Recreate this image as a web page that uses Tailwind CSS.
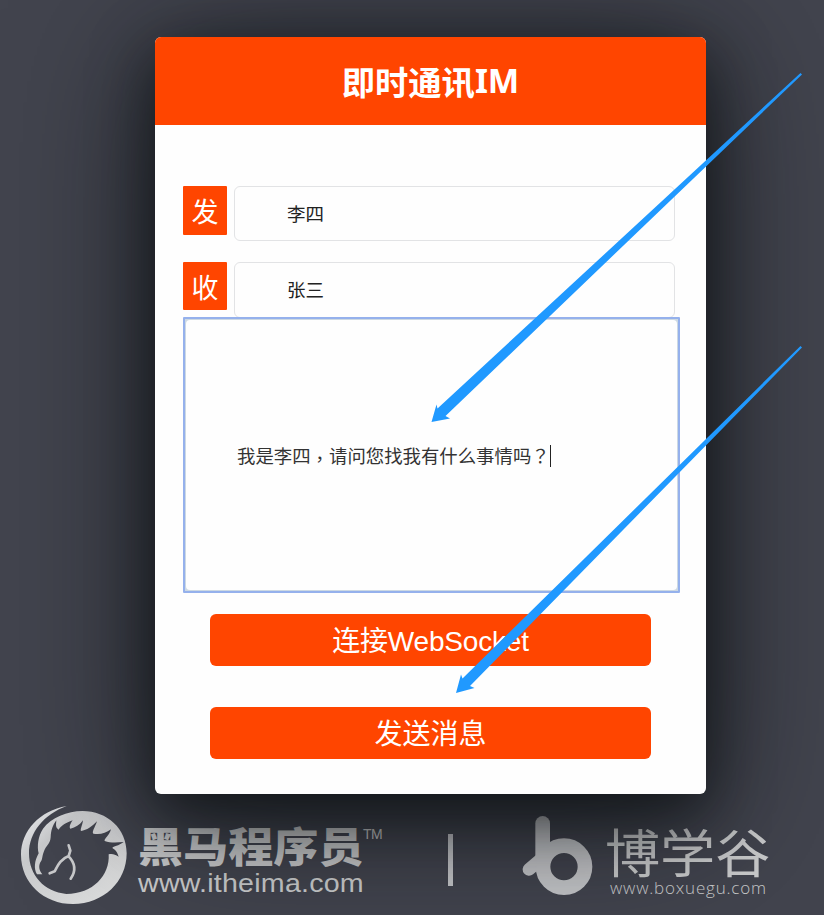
<!DOCTYPE html>
<html lang="zh-CN">
<head>
<meta charset="utf-8">
<title>即时通讯IM</title>
<script src="https://cdn.jsdelivr.net/npm/@tailwindcss/browser@4"></script>
</head>
<body class="bg-[#42444e] font-['Liberation_Sans','Noto_Sans_CJK_SC',sans-serif]">
<div class="relative flex h-[915px] w-[824px] flex-col overflow-hidden pt-[37px]">
  <main class="relative z-10 ml-[155px] flex h-[757px] w-[551px] shrink-0 flex-col rounded-md bg-[#fefefe] shadow-[0_20px_60px_rgba(8,12,14,0.65),0_18px_140px_rgba(8,12,14,0.7)]">
    <h1 class="flex h-[88px] shrink-0 items-center justify-center rounded-t-md bg-[#ff4500] pb-px font-['Noto_Sans','Noto_Sans_CJK_SC',sans-serif] text-[33.3px] font-bold leading-none text-white"><span class="font-['Noto_Sans_CJK_SC',sans-serif]">即时通讯</span>IM</h1>
    <div class="flex flex-col pl-7 pt-[61px]">
      <div class="flex h-[76px] items-start gap-[7px]">
        <span class="flex h-[49px] w-11 items-center justify-center rounded-[1px] bg-[#ff4500] pt-1.5 text-[27px] leading-none text-white">发</span>
        <div class="flex h-[55px] w-[441px] items-center rounded-md border border-[#e2e3e5] pl-[52px] pt-1 text-[18.5px] leading-none text-[#222]">李四</div>
      </div>
      <div class="flex h-[55px] items-start gap-[7px]">
        <span class="flex h-12 w-11 items-center justify-center rounded-[1px] bg-[#ff4500] pt-1.5 text-[27px] leading-none text-white">收</span>
        <div class="flex h-[56px] w-[441px] items-center rounded-md border border-[#e2e3e5] pl-[52px] pt-[3px] text-[18.5px] leading-none text-[#222]">张三</div>
      </div>
      <div class="z-10 h-[276px] w-[497px] rounded-[1px] border-2 border-[#95b1ec] bg-[#cdd9e3] p-px">
        <div class="flex h-full items-center rounded bg-[#fefefe] pl-[51px] pt-0.5 text-[18.4px] leading-none text-[#333]"><span class="whitespace-nowrap">我是李四<span lang="zh-TW" class="relative top-[3px] font-['Noto_Sans_CJK_TC',sans-serif]">，</span>请问您找我有什么事情吗<span lang="zh-TW" class="font-['Noto_Sans_CJK_TC',sans-serif]">？</span></span><span class="h-[22px] w-px bg-[#222]"></span></div>
      </div>
    </div>
    <div class="flex flex-col gap-[41px] pl-[55px] pt-[21px]">
      <button class="flex h-[52px] w-[441px] items-center justify-center rounded-md bg-[#ff4500] pt-[3px] text-[28px] leading-none text-white"><span class="tracking-[-0.2px]">连接WebSocket</span></button>
      <button class="flex h-[52px] w-[441px] items-center justify-center rounded-md bg-[#ff4500] pt-1 text-[28px] leading-none text-white">发送消息</button>
    </div>
  </main>

  <footer class="flex h-[121px] items-start pl-4 pt-[9px] text-[#cbcccd]">
    <svg class="h-[103px] w-[114px] shrink-0" viewBox="48 39 342 309">
      <defs><linearGradient id="silver" x1="0" y1="0" x2="1" y2="1"><stop offset="0" stop-color="#f0f2f5"/><stop offset=".3" stop-color="#c9cacc"/><stop offset="1" stop-color="#e1e2e2"/></linearGradient></defs>
      <path fill="url(#silver)" d="M200 48C119 62 63 123 63 194C63 279 132 342 219 342C311 342 380 275 380 190C380 116 322 63 247 63C203 63 153 83 129 116C114 139 111 169 116 190C103 213 101 237 111 253L127 253C117 242 115 228 121 217C128 209 125 202 132 184C137 168 151 162 152 142C153 121 158 106 169 91C168 105 166 113 176 119C184 106 197 99 218 91C210 102 207 112 211 116C226 113 239 105 249 91C247 107 240 118 243 123C260 121 277 109 291 94C284 114 275 126 280 131C299 135 317 130 333 118C328 137 311 147 314 153C331 159 349 158 371 156C356 168 340 168 337 174C349 181 352 188 356 200C345 193 336 190 326 193C330 256 279 312 199 312C133 306 87 256 87 190C87 127 132 73 200 48Z"/>
      <path fill="none" stroke="#c9cacc" stroke-width="8" stroke-linecap="round" stroke-linejoin="round" d="M206 166L211 182L206 198C179 208 172 230 164 244L149 250M206 199C224 218 229 242 212 266"/>
    </svg>
    <div class="ml-2 mt-[21px] w-[225px]">
      <div class="h-[45px] origin-left scale-x-[1.1] whitespace-nowrap font-['Noto_Sans_CJK_SC',sans-serif] text-[41px] font-black leading-[40px]">黑马程序员</div>
      <div class="origin-left scale-x-[1.08] whitespace-nowrap text-[26.5px] leading-[28px] tracking-[0.2px]">www.itheima.com</div>
    </div>
    <div class="mt-[23px] w-[20px] leading-none"><span class="inline-block text-[14px] leading-none tracking-[-0.5px]">TM</span></div>
    <div class="ml-[65px] mt-[31px] h-[52px] w-[5px] bg-[#c5c6c9]"></div>
    <svg class="ml-[69px] mt-[12px] h-[81px] w-[71px] shrink-0" viewBox="67 75 213 243">
      <path fill="none" stroke="#c5c6c9" stroke-width="44" stroke-linecap="round" d="M129 100V230"/>
      <path fill="none" stroke="#c5c6c9" stroke-width="38" stroke-linecap="round" d="M126 206L88 238"/>
      <circle cx="193" cy="230" r="63" fill="none" stroke="#c5c6c9" stroke-width="44"/>
    </svg>
    <div class="ml-3 mt-[21px] w-[170px]">
      <div class="h-[55px] origin-left scale-x-[1.06] whitespace-nowrap font-['Noto_Sans_CJK_SC',sans-serif] text-[52px] font-normal leading-[54px]">博学谷</div>
      <div class="origin-left whitespace-nowrap pl-[5px] font-['Open_Sans',sans-serif] text-[17px] font-light leading-[18px] tracking-[0.8px]">www.boxuegu.com</div>
    </div>
  </footer>

  <svg class="pointer-events-none absolute inset-0 z-20 h-[915px] w-[824px]" viewBox="0 0 824 915" fill="#2099ff">
    <path d="M802 74.500L800.500 73L437.500 408.500L436.500 404.500L431.500 422L450 418.500L445.500 416Z"/>
    <path d="M802 347.500L800.500 346L462.500 678.500L461 674.500L456 693L474.500 688L470 686Z"/>
  </svg>
</div>
</body>
</html>
